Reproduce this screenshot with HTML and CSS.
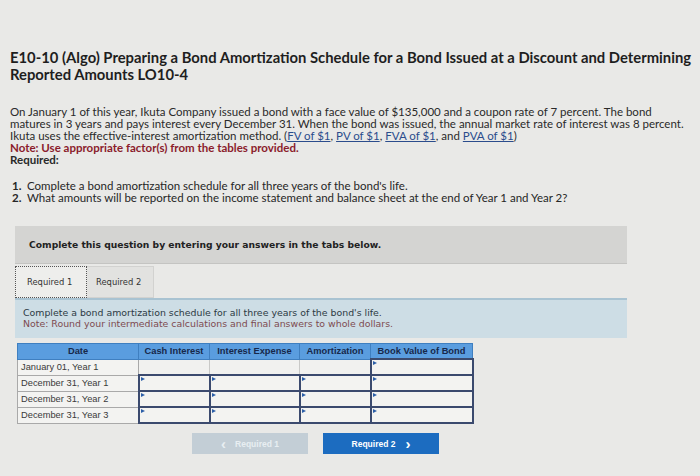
FILE: index.html
```html
<!DOCTYPE html>
<html>
<head>
<meta charset="utf-8">
<link rel="stylesheet" href="styles.css">
</head>
<body>
<div class="page">
  <h1 class="title">E10-10 (Algo) Preparing a Bond Amortization Schedule for a Bond Issued at a Discount and Determining<br>Reported Amounts LO10-4</h1>
  <p class="intro">On January 1 of this year, Ikuta Company issued a bond with a face value of $135,000 and a coupon rate of 7 percent. The bond<br>matures in 3 years and pays interest every December 31. When the bond was issued, the annual market rate of interest was 8 percent.<br>Ikuta uses the effective-interest amortization method. (<span class="link">FV of $1</span>, <span class="link">PV of $1</span>, <span class="link">FVA of $1</span>, and <span class="link">PVA of $1</span>)<br><span class="note">Note: Use appropriate factor(s) from the tables provided.</span><br><span class="req">Required:</span></p>
  <ol class="steps">
    <li><span class="num">1.</span>Complete a bond amortization schedule for all three years of the bond's life.</li>
    <li><span class="num">2.</span>What amounts will be reported on the income statement and balance sheet at the end of Year 1 and Year 2?</li>
  </ol>
  <div class="banner">Complete this question by entering your answers in the tabs below.</div>
  <div class="tabs">
    <div class="tab active">Required 1</div>
    <div class="tab">Required 2</div>
  </div>
  <div class="instr">
    <div>Complete a bond amortization schedule for all three years of the bond's life.</div>
    <div class="instr-note">Note: Round your intermediate calculations and final answers to whole dollars.</div>
  </div>
  <table class="sched">
    <colgroup>
      <col class="c-date"><col class="c-cash"><col class="c-ie"><col class="c-am"><col class="c-bv">
    </colgroup>
    <thead>
      <tr><th>Date</th><th>Cash Interest</th><th>Interest Expense</th><th>Amortization</th><th>Book Value of Bond</th></tr>
    </thead>
    <tbody>
      <tr><td class="label">January 01, Year 1</td><td class="plain"></td><td class="plain"></td><td class="plain"></td><td class="input"></td></tr>
      <tr><td class="label">December 31, Year 1</td><td class="input"></td><td class="input"></td><td class="input"></td><td class="input"></td></tr>
      <tr><td class="label">December 31, Year 2</td><td class="input"></td><td class="input"></td><td class="input"></td><td class="input"></td></tr>
      <tr><td class="label">December 31, Year 3</td><td class="input"></td><td class="input"></td><td class="input"></td><td class="input"></td></tr>
    </tbody>
  </table>
  <div class="nav">
    <div class="btn prev"><span class="chev">&lsaquo;</span>Required 1</div>
    <div class="btn next">Required 2<span class="chev">&rsaquo;</span></div>
  </div>
</div>
</body>
</html>
```

FILE: styles.css
```css
html, body {
  margin: 0;
  background: #e9e9e7;
}
.page {
  padding: 49px 10px 0 10px;
  font-family: Lato, "Open Sans", sans-serif;
  color: #262626;
}
.title {
  margin: 0;
  font-family: Lato, sans-serif;
  font-weight: 700;
  font-size: 14.8px;
  line-height: 17px;
  color: #1e1e1e;
  white-space: nowrap;
}
.intro {
  margin: 23px 0 0 0;
  font-size: 11.5px;
  line-height: 12px;
  white-space: nowrap;
  color: #2a2a2a;
}
.link {
  color: #2b4c8c;
  text-decoration: underline;
}
.note {
  color: #8b1c2c;
  font-weight: 700;
}
.req {
  font-weight: 700;
}
.steps {
  list-style: none;
  margin: 14px 0 0 0;
  padding: 0 0 0 2px;
  font-size: 11.5px;
  line-height: 12px;
  white-space: nowrap;
}
.steps li {
  display: flex;
}
.num {
  width: 15px;
  font-weight: 700;
}
.banner {
  margin: 22px 0 0 5px;
  width: 598px;
  height: 37px;
  padding-left: 14px;
  display: flex;
  align-items: center;
  background: #d4d4d2;
  border-bottom: 1px solid #c4c4c2;
  font-family: "DejaVu Sans", sans-serif;
  font-weight: 700;
  font-size: 9.2px;
  color: #222;
}
.tabs {
  display: flex;
  margin: 2px 0 0 5px;
}
.tab {
  height: 32px;
  display: flex;
  align-items: center;
  box-sizing: border-box;
  font-family: "DejaVu Sans", sans-serif;
  font-size: 8.4px;
  color: #333;
}
.tab.active {
  width: 72px;
  padding-left: 11px;
  border: 1px dotted #555;
  background: #eeeeec;
}
.tab:not(.active) {
  width: 67px;
  padding-left: 9px;
  background: #e2e2e0;
  border: 1px solid #d2d2d0;
  border-left: none;
}
.instr {
  margin-left: 5px;
  height: 40px;
  box-sizing: border-box;
  width: 612px;
  padding: 7px 8px 0 8px;
  background: #cddde5;
  border-top: 2px solid #a9c3d2;
  font-family: "DejaVu Sans", sans-serif;
  font-size: 9.4px;
  line-height: 11px;
  color: #2c3a44;
}
.instr-note {
  color: #7d4b50;
}
.sched {
  margin: 5px 0 0 7px;
  border-collapse: collapse;
  table-layout: fixed;
  width: 455px;
  font-family: "Liberation Sans", Arial, sans-serif;
  font-size: 9.3px;
}
.sched th {
  height: 14px;
  padding: 0;
  background: #5a9ddf;
  border: 1px solid #3f7fc0;
  color: #17284a;
  font-weight: 700;
  text-align: center;
  white-space: nowrap;
  overflow: hidden;
}
.c-date { width: 121px; }
.c-cash { width: 71px; }
.c-ie { width: 90px; }
.c-am { width: 71px; }
.c-bv { width: 102px; }
.sched td {
  height: 14px;
  padding: 0;
  white-space: nowrap;
}
.sched td.label {
  padding-left: 3px;
  background: #f3f3f1;
  border: 1px solid #a9a9a9;
  color: #3a3a3a;
}
.sched td.plain {
  background: #f1f1ef;
  border: 1px solid #c9c9c7;
}
.sched td.input {
  position: relative;
  background: #f3f3f1;
  border: 2px solid #3b4a6e;
}
.sched td.input::before {
  content: "";
  position: absolute;
  left: 1px;
  top: 1px;
  border-left: 4px solid #2c5fa8;
  border-top: 2px solid transparent;
  border-bottom: 2px solid transparent;
}
.nav {
  display: flex;
  gap: 15px;
  margin: 9px 0 0 182px;
}
.btn {
  width: 116px;
  height: 21px;
  display: flex;
  align-items: center;
  justify-content: center;
  font-family: "Liberation Sans", Arial, sans-serif;
  font-weight: 700;
  font-size: 8.5px;
  color: #fff;
}
.btn.prev {
  background: #c3ced6;
  color: #e8eef2;
}
.btn.prev .chev {
  margin-right: 9px;
}
.btn.next {
  background: #1c6cc0;
}
.btn.next .chev {
  margin-left: 10px;
}
.chev {
  font-size: 15px;
  font-weight: 700;
  line-height: 1;
}
```
